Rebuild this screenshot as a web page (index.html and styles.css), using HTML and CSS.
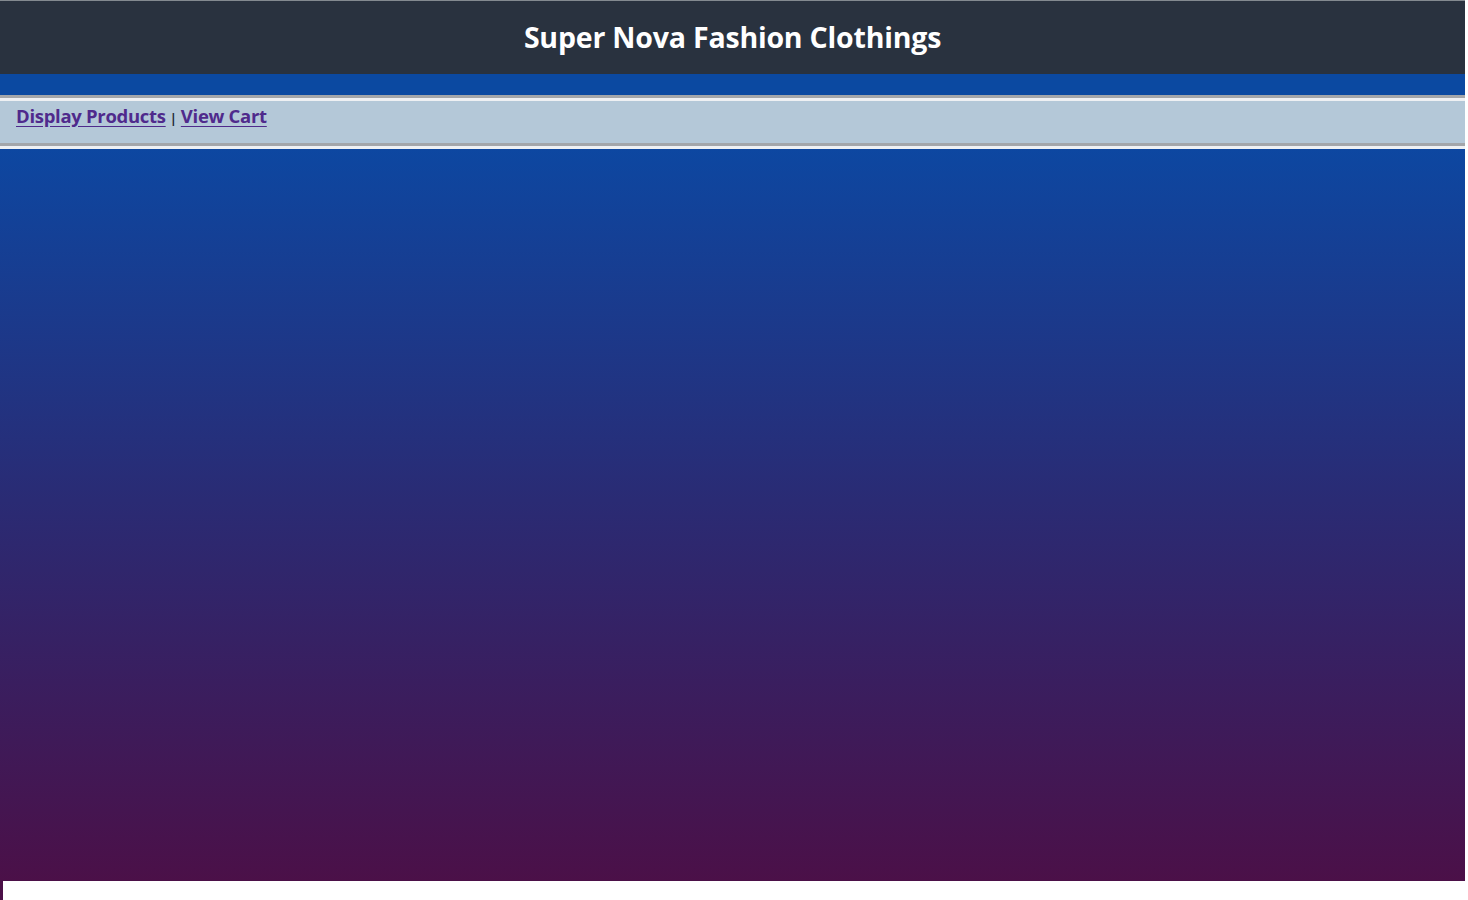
FILE: index.html
```html
<!DOCTYPE html>
<html lang="en">
<head>
<meta charset="utf-8">
<title>Super Nova Fashion Clothings</title>
<link rel="stylesheet" href="styles.css">
</head>
<body>
<div class="page">
  <header class="header">
    <h1 class="title">Super Nova Fashion Clothings</h1>
  </header>
  <div class="band"></div>
  <div class="nav-wrap">
    <nav class="nav">
      <a class="nav-link" href="#">Display Products</a><span class="sep">|</span><a class="nav-link" href="#">View Cart</a>
    </nav>
  </div>
  <main class="main"></main>
  <div class="foot"><span class="foot-edge"></span></div>
</div>
</body>
</html>
```
FILE: styles.css
```css
html, body {
  margin: 0;
  padding: 0;
  background: #ffffff;
}
body {
  font-family: "Open Sans", "Noto Sans", sans-serif;
}
.page {
  width: 1465px;
  display: flex;
  flex-direction: column;
}
.header {
  background: #29323f;
  border-top: 1px solid #838a90;
  height: 73px;
  display: flex;
  align-items: center;
  justify-content: center;
}
.title {
  margin: 0;
  color: #ffffff;
  font-size: 28.5px;
  font-weight: 700;
  letter-spacing: -0.2px;
  padding-bottom: 2px;
}
.band {
  height: 21px;
  background: #0b49a1;
}
.nav-wrap {
  border-top: 3px solid #a3a6aa;
  border-bottom: 3px solid #eef0f3;
}
.nav {
  border-top: 3px solid #eef0f3;
  border-bottom: 3px solid #a3a6aa;
  background: #b4c8d8;
  height: 40px;
  padding: 2px 16px 0 16px;
  display: flex;
  align-items: flex-start;
}
.nav-link {
  color: #4f2a8c;
  font-size: 18.5px;
  font-weight: 700;
  text-decoration: underline;
  text-underline-offset: 3px;
  letter-spacing: -0.3px;
}
.sep {
  color: #1e2a33;
  font-size: 13px;
  font-weight: 700;
  margin: 6px 4px 0 4px;
}
.main {
  height: 732px;
  background: linear-gradient(to bottom, #0d47a1 0%, #2a2b74 48%, #4b1048 100%);
}
.foot {
  height: 20px;
  display: flex;
}
.foot-edge {
  width: 3px;
  background: #4b1048;
}
```
